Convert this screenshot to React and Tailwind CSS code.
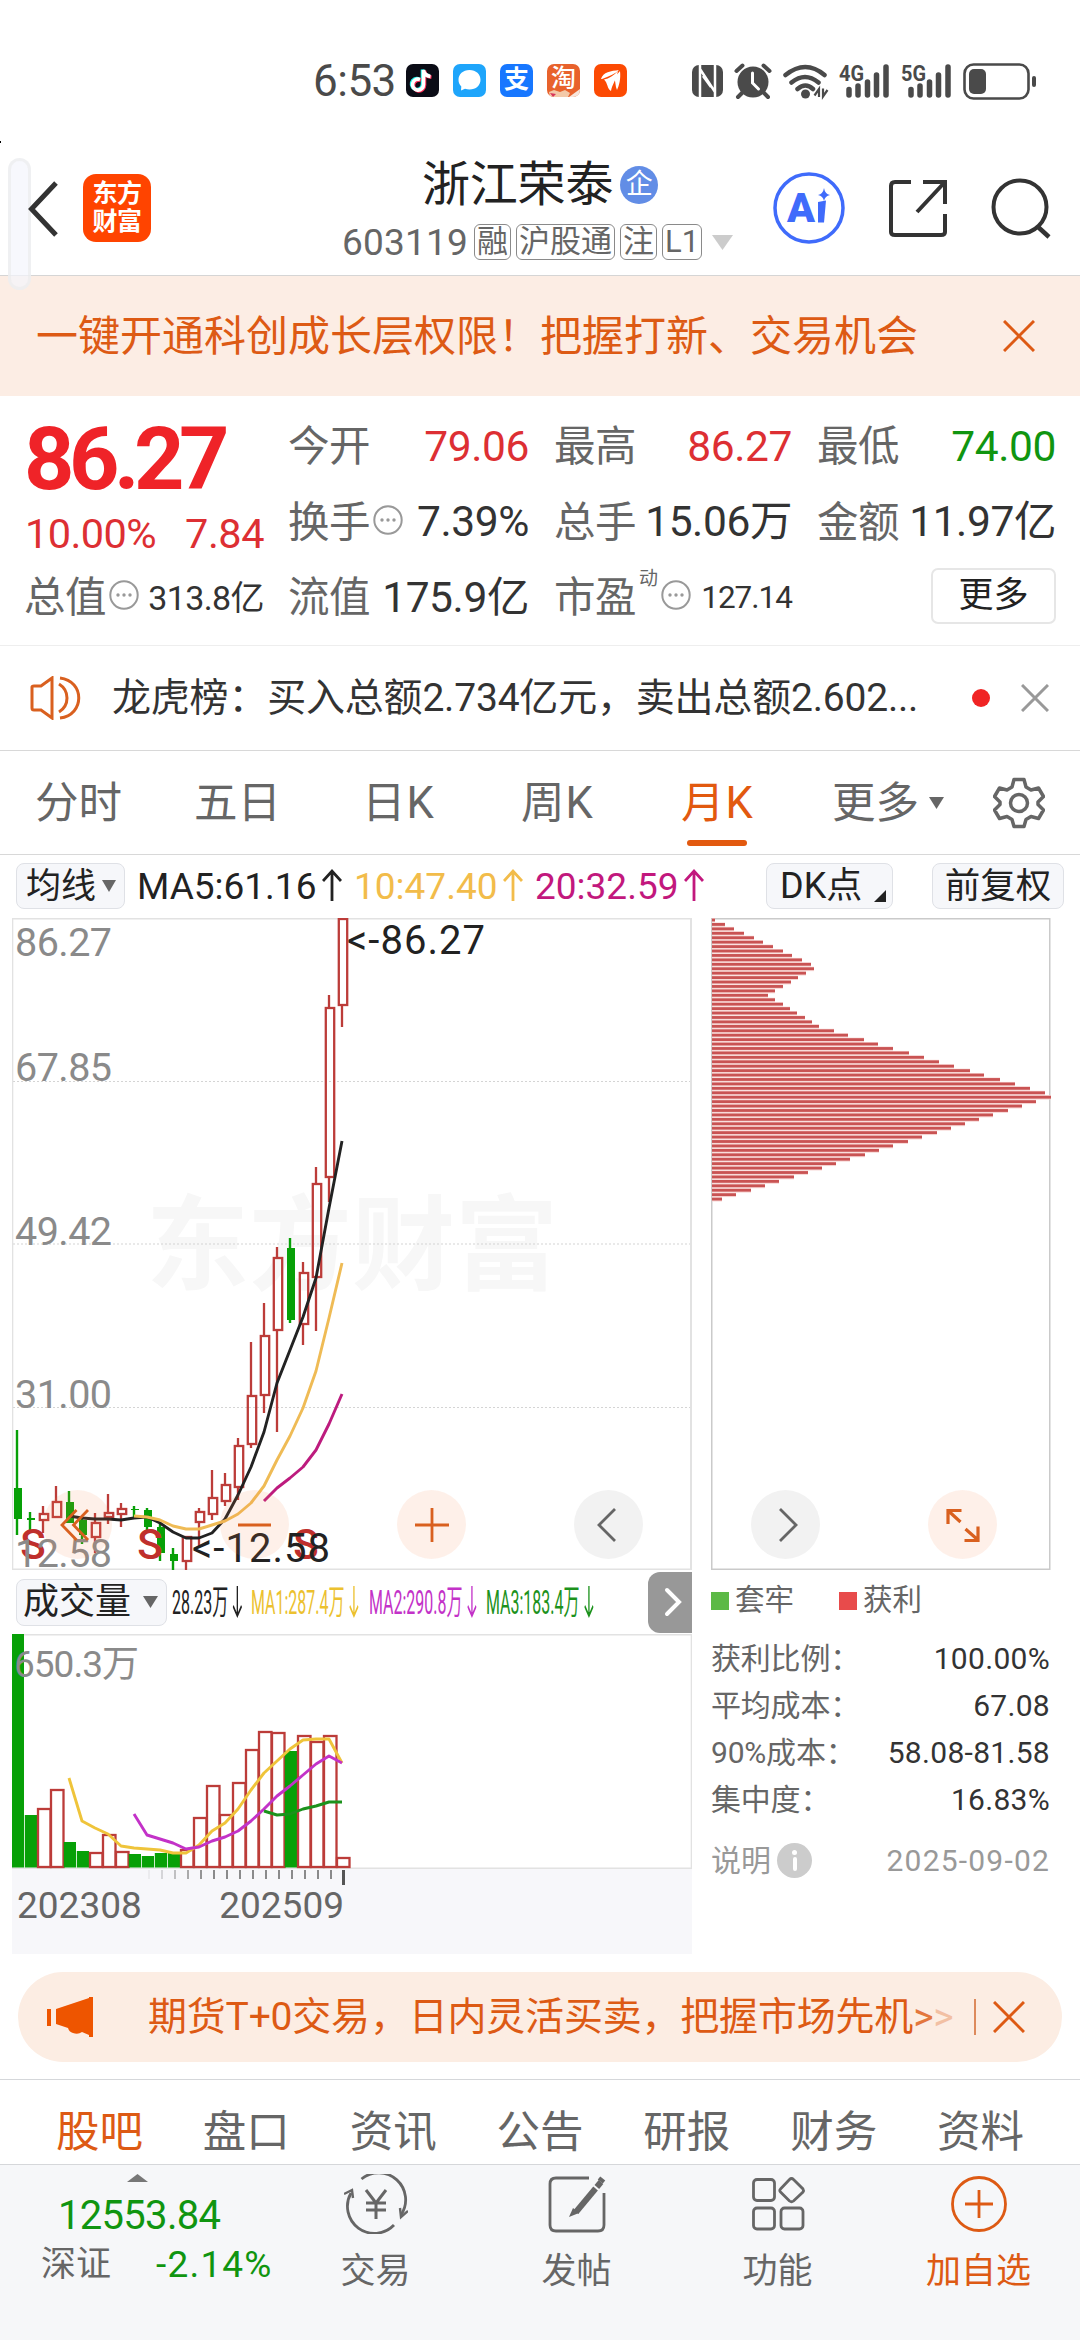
import React from "react";

// monthly candles: [up, high, bodyTop, bodyBottom, low] in chart pixels
const candles = [
  [0, 512, 570, 601, 617],
  [0, 594, 600, 602, 612],
  [1, 588, 596, 602, 615],
  [1, 568, 584, 599, 599],
  [0, 573, 584, 605, 605],
  [0, 600, 602, 617, 626],
  [1, 595, 605, 619, 635],
  [1, 576, 595, 599, 606],
  [1, 585, 591, 596, 609],
  [0, 588, 591, 592, 599],
  [0, 590, 592, 609, 614],
  [0, 605, 609, 635, 643],
  [0, 630, 636, 643, 652],
  [1, 619, 619, 643, 652],
  [1, 590, 594, 604, 629],
  [1, 552, 580, 596, 602],
  [1, 555, 567, 583, 588],
  [1, 520, 528, 569, 582],
  [1, 424, 478, 526, 530],
  [1, 385, 418, 477, 495],
  [1, 329, 340, 412, 514],
  [0, 320, 330, 402, 405],
  [1, 344, 355, 406, 427],
  [1, 249, 266, 359, 413],
  [1, 77, 90, 259, 284],
  [1, 0, 1, 87, 109],
];

const ma5 = [598, 600, 601, 601, 602, 600, 599, 605, 614, 620, 620, 615, 601, 577, 549, 514, 465, 432, 399, 360, 290, 223];
const ma10 = [598, 599, 602, 608, 611, 611, 607, 603, 596, 585, 568, 542, 518, 490, 453, 400, 345];
const ma20 = [583, 570, 560, 549, 532, 506, 476];

// volume bars: [up, top]
const volumes = [
  [0, 0], [0, 181], [1, 174], [1, 155], [0, 208], [0, 217], [1, 218], [1, 200], [1, 217],
  [0, 220], [0, 222], [0, 219], [0, 218], [1, 215], [1, 183], [1, 151], [1, 180], [1, 148],
  [1, 115], [1, 97], [1, 98], [0, 117], [1, 101], [1, 107], [1, 101], [1, 223],
];

const vol5 = [144, 187, 194, 200, 212, 214, 215, 216, 219, 219, 211, 197, 189, 175, 156, 139, 127, 115, 106, 105, 105, 129];
const vol10 = [180, 201, 205, 209, 215, 213, 207, 203, 197, 187, 175, 162, 152, 141, 130, 122, 129];
const vol20 = [177, 181, 180, 175, 172, 168, 168];

const chips = [
  3, 13, 22, 32, 42, 51, 61, 71, 80, 90, 99, 102, 94, 86, 79, 71, 63, 56, 63, 71, 78, 85, 93, 100,
  107, 122, 136, 152, 166, 181, 197, 212, 227, 242, 258, 272, 288, 303, 318, 333, 339, 324, 310,
  296, 281, 267, 253, 239, 225, 210, 196, 181, 167, 153, 138, 124, 110, 96, 82, 67, 53, 39, 24, 10,
];

const STEP = 13;
const cx = (i) => 5 + i * STEP;

// the lines are right aligned, the last point is always candle 25
const linePoints = (values) =>
  values.map((y, i) => `${cx(26 - values.length + i)},${y}`).join(" ");

const StatusBar = () => (
  <div className="h-[130px] flex items-center pt-[31px] pl-[313px] pr-[43px] text-[#4a4a4a]">
    <span className="w-[93px] text-[44px] leading-none tracking-[-0.5px]">6:53</span>
    <div className="flex gap-[14px]">
      <svg className="w-[33px] h-[33px]" viewBox="0 0 33 33">
        <rect width="33" height="33" rx="7" fill="#0b0c16" />
        <g fill="none" strokeWidth="3.600">
          <path d="M14 15.500a5.500 5.500 0 1 0 3.500 5V6c.5 4 3.500 6 7 6.500" stroke="#25f4ee" transform="translate(-1 -.6)" />
          <path d="M14 15.500a5.500 5.500 0 1 0 3.500 5V6c.5 4 3.500 6 7 6.500" stroke="#fe2c55" transform="translate(1 .8)" />
          <path d="M14 15.500a5.500 5.500 0 1 0 3.500 5V6c.5 4 3.500 6 7 6.500" stroke="#fff" />
        </g>
      </svg>
      <svg className="w-[33px] h-[33px]" viewBox="0 0 33 33">
        <rect width="33" height="33" rx="7" fill="#1ea5fb" />
        <path d="M16.500 6c6.600 0 11 4.300 11 9.800s-4.400 9.800-11 9.800c-1.700 0-3.200-.3-4.500-.8L8 26.500l.3-4C6.500 20.800 5.500 18.500 5.500 15.800 5.500 10.300 9.900 6 16.500 6z" fill="#fff" />
      </svg>
      <div className="w-[33px] h-[33px] rounded-[7px] bg-[#1777ff] text-white text-[25px] leading-[32px] text-center font-bold">支</div>
      <div className="relative w-[33px] h-[33px] rounded-[7px] bg-[#e8622c] text-white text-[25px] leading-[29px] text-center font-medium overflow-hidden">
        淘
        <svg className="absolute left-0 bottom-0 w-[33px] h-[8px]" viewBox="0 0 33 8">
          <path d="M2 3l5-2 6 2 5-2 5 3-2 4H3z" fill="#f3c9a8" />
          <path d="M3 4l6 1-3 3z" fill="#d8345a" />
          <path d="M22 8L33 0v8z" fill="#f7e6dc" />
        </svg>
      </div>
      <svg className="w-[33px] h-[33px]" viewBox="0 0 33 33">
        <rect width="33" height="33" rx="7" fill="#fc4a03" />
        <path d="M7 15C9 8 17 7 25 6c-4 4-10 6-17 9zM10 15.500c5-1 10-4 14-8.500-2 9-6 14-7 20-4-2-3-8-7-11.500zM20 14l6-7c1 8-1 15-3 19-2-4-1-8-3-12z" fill="#fff" />
      </svg>
    </div>
    <svg className="ml-auto w-[345px] h-[40px]" viewBox="0 0 345 40" fill="#4a4a4a">
      {/* nfc */}
      <rect x="0" y="4" width="31" height="32" rx="7" />
      <path d="M8 3v33M8 8l15 23M23 3v33M11 15l8 11" stroke="#fff" strokeWidth="2.500" />
      {/* alarm */}
      <circle cx="61" cy="21" r="15.500" />
      <path d="M44.500 10l6-5.500M77.500 10l-6-5.500M51 31l-5 5M71 31l5 5" stroke="#4a4a4a" strokeWidth="4" strokeLinecap="round" />
      <path d="M60.500 12v10l6 6" stroke="#fff" strokeWidth="3" fill="none" strokeLinecap="round" />
      {/* wifi */}
      <g fill="none" stroke="#4a4a4a" strokeWidth="4.500" strokeLinecap="round">
        <path d="M93.500 14q20-16 39 0M99.500 21.500q13.500-11 27 0M105.500 28q8-7 15.500 0" />
      </g>
      <circle cx="113.500" cy="33" r="4.500" />
      <path d="M127 36v-8l-4.500 6.500M131 27.500v8l4.500-6.500" fill="none" stroke="#4a4a4a" strokeWidth="2.200" />
      {/* signals */}
      <text x="147" y="20" fontSize="22" fontWeight="700" textLength="25" lengthAdjust="spacingAndGlyphs">4G</text>
      <text x="209" y="20" fontSize="22" fontWeight="700" textLength="25" lengthAdjust="spacingAndGlyphs">5G</text>
      {[0, 62].map((dx) => (
        <path
          key={dx}
          transform={`translate(${dx} 0)`}
          d="M157 28.500v5.500M166 25v9M175.500 21v13M184.500 14v20M194 6v28"
          stroke="#4a4a4a"
          strokeWidth="5.500"
          strokeLinecap="round"
        />
      ))}
      {/* battery */}
      <rect x="272.500" y="3.500" width="64" height="34" rx="9" fill="none" stroke="#4a4a4a" strokeWidth="2.600" />
      <rect x="277" y="8" width="17" height="25" rx="5" />
      <rect x="340" y="15" width="4" height="11" rx="2" />
    </svg>
  </div>
);

const Tag = ({ children }) => (
  <span className="h-[36px] px-[2px] rounded-[6px] border-[1.500px] border-[#8a8a8a] text-[31px] leading-[33px] text-[#666]">
    {children}
  </span>
);

const Header = () => (
  <div className="relative h-[146px] flex items-start border-b border-[#d5d5d5]">
    <div className="absolute left-0 top-[11px] w-[1px] h-[2px] bg-black" />
    <div className="absolute z-10 left-[8px] top-[28px] w-[23px] h-[132px] rounded-full border-[3px] border-[#ebebeb]/60 bg-[#f3f5fc]/70" />
    <svg className="relative z-20 mt-[50px] ml-[26px] w-[34px] h-[58px]" viewBox="0 0 34 58" fill="none">
      <path d="M30 3L5.500 29 30 55" stroke="#333" strokeWidth="5" />
    </svg>
    <div className="mt-[44px] ml-[23px] w-[68px] h-[68px] rounded-[13px] bg-[#ff4400] text-white text-[25px] leading-[28px] pt-[6px] text-center font-bold tracking-[-0.5px]">
      东方
      <br />
      财富
    </div>
    <div className="ml-[190px] w-[394px] pt-[30px]">
      <div className="flex items-center ml-[81px] h-[50px]">
        <span className="text-[48px] leading-[50px] tracking-[-0.2px] text-[#222]">浙江荣泰</span>
        <span className="ml-[7px] w-[38px] h-[38px] rounded-full bg-[#628de6] text-white text-[27px] leading-[37px] text-center">企</span>
      </div>
      <div className="flex items-center mt-[14px] h-[36px]">
        <span className="ml-px w-[132px] pt-[2px] text-[37px] leading-[36px] tracking-[0.200px] text-[#666]">603119</span>
        <div className="flex gap-[5px]">
          <Tag>融</Tag>
          <Tag>沪股通</Tag>
          <Tag>注</Tag>
          <Tag>L1</Tag>
        </div>
        <svg className="ml-[10px] w-[21px] h-[15px]" viewBox="0 0 21 15">
          <path d="M0 0h21L10.500 15z" fill="#ccc" />
        </svg>
      </div>
    </div>
    <svg className="mt-[42px] ml-[38px] w-[72px] h-[72px]" viewBox="0 0 72 72">
      <circle cx="36" cy="36" r="34" fill="none" stroke="#3f6bfb" strokeWidth="3.500" />
      <text x="14" y="50" fontSize="40" fontWeight="900" fill="#3f6bfb" textLength="28" lengthAdjust="spacingAndGlyphs">A</text>
      <path d="M45 30l8-1.500-2 22h-6z" fill="#3f6bfb" />
      <path d="M51 16q1 6 6 7-5 1-6 6-1-5-6-6 5-1 6-7z" fill="#3f6bfb" />
    </svg>
    <svg className="mt-[48px] ml-[42px] w-[60px] h-[62px]" viewBox="0 0 60 62" fill="none" stroke="#333" strokeWidth="4">
      <path d="M24 4H8q-4 0-4 4v46q0 3 4 3h46q4 0 4-3V36M36 4h22v22M57 5L30 34" />
    </svg>
    <svg className="mt-[46px] ml-[43px] w-[62px] h-[64px]" viewBox="0 0 62 64" fill="none" stroke="#333" strokeWidth="4">
      <circle cx="30" cy="31" r="26.500" />
      <path d="M47 50l12 11" strokeWidth="4.500" />
    </svg>
  </div>
);

const Banner = () => (
  <div className="h-[120px] flex items-center pl-[36px] bg-[#fcede4] text-[#dd5a14]">
    <span className="w-[967px] pt-[2px] text-[42px] leading-none whitespace-nowrap">
      一键开通科创成长层权限！把握打新、交易机会
    </span>
    <svg className="w-[32px] h-[32px]" viewBox="0 0 32 32">
      <path d="M1 1l30 30M31 1L1 31" stroke="#dd5a14" strokeWidth="3" />
    </svg>
  </div>
);

const Dots = () => (
  <svg className="ml-[3px] -mt-[6px] w-[30px] h-[30px] shrink-0" viewBox="0 0 30 30">
    <circle cx="15" cy="15" r="13.700" fill="none" stroke="#999" strokeWidth="2" />
    <g fill="#999">
      <circle cx="9" cy="15" r="1.700" />
      <circle cx="15" cy="15" r="1.700" />
      <circle cx="21" cy="15" r="1.700" />
    </g>
  </svg>
);

const Cell = ({ label, value, dots, className = "text-[#333]" }) => (
  <div className="flex items-center whitespace-nowrap">
    <span className="-ml-px text-[41.500px] text-[#666] tracking-[-0.5px]">{label}</span>
    {dots && <Dots />}
    <span className={"ml-auto text-[42.500px] tracking-[-0.4px] " + className}>{value}</span>
  </div>
);

const Quote = () => (
  <div className="h-[250px] flex border-b border-[#eeeeee] leading-none">
    <div className="w-[289px] pt-[23px] whitespace-nowrap">
      <div className="h-[80px] pl-[24px] flex items-center text-[88px] font-bold tracking-[-5.500px] text-[#ef2328]">86.27</div>
      <div className="h-[70px] pl-[25px] pr-[25px] flex items-center justify-between text-[41.500px] text-[#dd2f33]">
        <span className="tracking-[-0.6px]">10.00%</span>
        <span className="tracking-[-0.5px]">7.84</span>
      </div>
      <div className="h-[58px] pl-[24px] pr-[25px] flex items-center">
        <span className="text-[41.500px] text-[#666] tracking-[-0.5px]">总值</span>
        <Dots />
        <span className="ml-auto text-[34px] text-[#333] tracking-[-0.6px]">313.8亿</span>
      </div>
    </div>
    <div className="pt-[13px] grid grid-cols-[240px_237px_238px] grid-rows-[76px_75px_76px] gap-x-[26px]">
      <Cell label="今开" value="79.06" className="text-[#dd2f33]" />
      <Cell label="最高" value="86.27" className="text-[#dd2f33]" />
      <Cell label="最低" value="74.00" className="text-[#109510]" />
      <Cell label="换手" value="7.39%" dots />
      <Cell label="总手" value="15.06万" />
      <Cell label="金额" value="11.97亿" />
      <Cell label="流值" value="175.9亿" />
      <div className="flex items-center text-[#666]">
        <span className="-ml-px text-[41.500px] tracking-[-0.5px]">市盈</span>
        <span className="text-[19px] -mt-[40px] ml-[3px]">动</span>
        <Dots />
        <span className="ml-auto text-[31.500px] tracking-[-1px] text-[#333]">127.14</span>
      </div>
      <div className="flex items-center justify-end">
        <span className="-mt-[4px] w-[125px] h-[56px] rounded-[7px] border-2 border-[#e6e6e6] text-center text-[35px] leading-[51px] text-[#222]">
          更多
        </span>
      </div>
    </div>
  </div>
);

const News = () => (
  <div className="h-[105px] flex items-center pl-[29px] border-b border-[#d8d8d8]">
    <svg className="w-[52px] h-[44px]" viewBox="0 0 52 44" fill="none" stroke="#d9601f" strokeWidth="3">
      <path d="M3 11q0-1 2-1h7l11-8v40l-11-8H5q-2 0-2-2zM30 8q8 5 8 14t-8 14M31 2c25 3 25 37 0 40" />
    </svg>
    <span className="ml-[31px] w-[860px] text-[39px] leading-none tracking-[-0.200px] whitespace-nowrap text-[#333]">
      龙虎榜：买入总额2.734亿元，卖出总额2.602...
    </span>
    <span className="w-[18px] h-[18px] rounded-full bg-[#f02424]" />
    <svg className="ml-[31px] w-[28px] h-[28px]" viewBox="0 0 28 28">
      <path d="M1 1l26 26M27 1L1 27" stroke="#999" strokeWidth="3" />
    </svg>
  </div>
);

const PeriodTabs = () => (
  <div className="h-[104px] flex items-center pl-[35px] border-b border-[#d8d8d8] text-[43.500px] leading-none text-[#666] whitespace-nowrap">
    <span className="w-[159px] pt-[2px]">分时</span>
    <span className="w-[168px] pt-[2px]">五日</span>
    <span className="w-[159px] pt-[2px] tracking-[1px]">日K</span>
    <span className="w-[160px] pt-[2px] tracking-[1px]">周K</span>
    <span className="relative w-[151px] pt-[2px] tracking-[1px] text-[#e2590f]">
      月K
      <span className="absolute left-[6px] top-[60px] w-[60px] h-[6px] rounded-full bg-[#e2590f]" />
    </span>
    <span className="pt-[2px]">更多</span>
    <svg className="ml-[10px] w-[15px] h-[12px]" viewBox="0 0 15 12">
      <path d="M0 0h15L7.500 12z" fill="#666" />
    </svg>
    <svg className="ml-[49px] w-[52px] h-[52px]" viewBox="0 0 52 52" fill="none" stroke="#666" strokeWidth="3.500" strokeLinejoin="round">
      <path d="M21 2.500h10l2 7.500 5 3 7.500-2 5 8.500-5.500 5.500v2.500l5.500 5.500-5 8.500-7.500-2-5 3-2 7H21l-2-7-5-3-7.500 2-5-8.500L7 27.500V25l-5.500-5.500 5-8.500 7.500 2 5-3z" />
      <circle cx="26" cy="26" r="8.500" />
    </svg>
  </div>
);

const Arrow = ({ up }) => (
  <svg className="ml-[6px] w-[20px] h-[34px] shrink-0" viewBox="0 0 20 34" fill="none" stroke="currentColor" strokeWidth="2.800">
    {up ? <path d="M10 33V3M1 13l9-10 9 10" /> : <path d="M10 1v30M1 21l9 10 9-10" />}
  </svg>
);

const MaBar = () => (
  <div className="h-[63px] flex items-center pl-[16px] pb-[1px] text-[37px] leading-none whitespace-nowrap">
    <span className="w-[109px] h-[46px] flex items-center justify-between pl-[9px] pr-[8px] rounded-[8px] border border-[#dfe1e6] bg-[#f6f7fa] text-[35px] text-[#222]">
      均线
      <svg className="w-[14px] h-[12px]" viewBox="0 0 14 12">
        <path d="M0 0h14L7 12z" fill="#666" />
      </svg>
    </span>
    <span className="ml-[12px] w-[217px] flex text-[#222]">MA5:61.16<Arrow up /></span>
    <span className="w-[181px] flex text-[#f2bc4a]">10:47.40<Arrow up /></span>
    <span className="w-[231px] flex text-[#c2187d]">20:32.59<Arrow up /></span>
    <span className="relative w-[127px] h-[46px] pl-[13px] rounded-[8px] border border-[#dfe1e6] bg-[#f6f7fa] text-[36px] leading-[45px] text-[#222]">
      DK点
      <svg className="absolute right-[6px] bottom-[6px] w-[12px] h-[12px]" viewBox="0 0 12 12">
        <path d="M12 0v12H0z" fill="#222" />
      </svg>
    </span>
    <span className="ml-[39px] w-[132px] h-[46px] rounded-[8px] border border-[#dfe1e6] bg-[#f6f7fa] text-center text-[35.500px] leading-[45px] text-[#222]">
      前复权
    </span>
  </div>
);

const priceLabels = [
  ["86.27", 38],
  ["67.85", 163],
  ["49.42", 327],
  ["31.00", 490],
  ["12.58", 649],
];

const KChart = () => (
  <svg className="block w-[680px] h-[652px]" viewBox="0 0 680 652">
    <text x="134" y="364" fontSize="103" fontWeight="700" fill="#f7f7f7" textLength="412">东方财富</text>
    {[163.5, 326, 489.5].map((y) => (
      <path key={y} d={`M1 ${y}H680`} stroke="#d4d4d4" strokeWidth="1.200" strokeDasharray="2 2" />
    ))}
    <path d="M0 .8H680M0 651.200H680M.5 0V652" stroke="#e2e2e2" strokeWidth="1.600" fill="none" />
    <path d="M679 0V652" stroke="#e2e2e2" strokeWidth="2" />
    {candles.map(([up, high, top, bottom, low], i) =>
      up ? (
        <g key={i} stroke="#bc3c39" strokeWidth="2.300" fill="none">
          <path d={`M${cx(i)} ${high}V${top}M${cx(i)} ${bottom}V${low}`} />
          <rect x={cx(i) - 3.2} y={top} width="8.400" height={bottom - top} />
        </g>
      ) : (
        <g key={i} fill="#07a007">
          <rect x={cx(i) - 1.2} y={high} width="2.400" height={low - high} />
          <rect x={cx(i) - 3} y={top} width="8" height={bottom - top} />
        </g>
      )
    )}
    <g fill="none" strokeWidth="2.900" strokeLinejoin="round">
      <polyline points={linePoints(ma5)} stroke="#222" />
      <polyline points={linePoints(ma10)} stroke="#efbb55" />
      <polyline points={linePoints(ma20)} stroke="#bd1b7e" />
    </g>
    <g fill="#bf2f2c" fontSize="42" fontWeight="500" textAnchor="middle">
      <text x="21" y="641">S</text>
      <text x="138" y="641">S</text>
      <text x="294" y="641">S</text>
    </g>
    <g fill="#8a8a8a" fontSize="39.500">
      {priceLabels.map(([label, y]) => (
        <text key={label} x="3" y={y} textLength="97">{label}</text>
      ))}
    </g>
    <g fill="#222" fontSize="40">
      <text x="335" y="36" textLength="138">&lt;-86.27</text>
      <text x="180" y="644" textLength="138">&lt;-12.58</text>
    </g>
  </svg>
);

const ChipChart = () => (
  <svg className="block w-[340px] h-[652px]" viewBox="0 0 340 652">
    <rect x=".75" y=".75" width="338" height="650.500" fill="none" stroke="#cacaca" strokeWidth="1.500" />
    {chips.map((w, i) => (
      <g key={i}>
        <rect x="1" y={i * 4.43} width={w} height="4.430" fill="#f8d8d6" />
        <rect x="1" y={0.6 + i * 4.43} width={w} height="2.800" fill="#c95353" />
      </g>
    ))}
  </svg>
);

const RoundButton = ({ gray, children }) => (
  <span
    className={
      "w-[69px] h-[69px] rounded-full flex items-center justify-center " +
      (gray ? "bg-[#f2f2f2]" : "bg-[#f5854a]/12")
    }
  >
    <svg className="w-[40px] h-[40px]" viewBox="0 0 40 40" fill="none" stroke={gray ? "#666" : "#d9601f"} strokeWidth="2.800">
      {children}
    </svg>
  </span>
);

const ChartButtons = () => (
  <div className="absolute left-[43px] top-[572px] flex gap-[108px]">
    <RoundButton><path d="M18.500 5L4 20l14.500 15M30 5L15.500 20 30 35" /></RoundButton>
    <RoundButton><path d="M3 20h33" /></RoundButton>
    <RoundButton><path d="M3 20h34M20 3v34" /></RoundButton>
    <RoundButton gray><path d="M26 4L10 20l16 16" /></RoundButton>
    <RoundButton gray><path d="M14 4l16 16-16 16" /></RoundButton>
    <RoundButton><path d="M18.500 5.500H5v13.500M5 5.500L17.500 17M22.500 24L35 35M35 21.500v14H21.500" strokeWidth="3.200" /></RoundButton>
  </div>
);

const VolumeHeader = () => (
  <div className="h-[64px] flex items-center pl-[4px] leading-none whitespace-nowrap">
    <span className="w-[151px] h-[47px] flex items-center justify-between pl-[6px] pr-[8px] rounded-[8px] border border-[#dfe1e6] bg-[#f6f7fa] text-[36px] text-[#222]">
      成交量
      <svg className="w-[15px] h-[12px]" viewBox="0 0 15 12">
        <path d="M0 0h15L7.500 12z" fill="#666" />
      </svg>
    </span>
    <div className="ml-[5px] w-[476px] flex text-[34px]">
      <span className="w-[79px]"><span className="inline-flex gap-[4px] origin-left scale-x-[0.47] text-[#222]">28.23万<Arrow /></span></span>
      <span className="w-[118px]"><span className="inline-flex gap-[4px] origin-left scale-x-[0.47] text-[#ecc12f]">MA1:287.4万<Arrow /></span></span>
      <span className="w-[117px]"><span className="inline-flex gap-[4px] origin-left scale-x-[0.47] text-[#c332c8]">MA2:290.8万<Arrow /></span></span>
      <span className="w-[117px]"><span className="inline-flex gap-[4px] origin-left scale-x-[0.47] text-[#1c921c]">MA3:183.4万<Arrow /></span></span>
    </div>
    <span className="w-[44px] h-[61px] rounded-l-[12px] bg-[#989898] flex items-center justify-center">
      <svg className="ml-[6px] w-[18px] h-[30px]" viewBox="0 0 18 30" fill="none">
        <path d="M3 3l12 12L3 27" stroke="#fff" strokeWidth="4" strokeLinecap="round" />
      </svg>
    </span>
  </div>
);

const VolumeChart = () => (
  <svg className="block w-[680px] h-[235px]" viewBox="0 0 680 235">
    <path d="M0 .8H680M0 234.200H680M.5 0V235M679.500 0V235" stroke="#e2e2e2" strokeWidth="1.600" fill="none" />
    {volumes.map(([up, top], i) =>
      up ? (
        <rect key={i} x={i * STEP} y={top + 1} width="12.500" height={232 - top} fill="#fff" stroke="#bc3c39" strokeWidth="2.300" />
      ) : (
        <rect key={i} x={i * STEP - 0.2} y={top} width="12.200" height={233.5 - top} fill="#07a007" />
      )
    )}
    <g fill="none" strokeWidth="2.900" strokeLinejoin="round">
      <polyline points={linePoints(vol5)} stroke="#efc43a" />
      <polyline points={linePoints(vol10)} stroke="#c332c8" />
      <polyline points={linePoints(vol20)} stroke="#1c921c" />
    </g>
    <text x="2" y="43" fontSize="37" fill="#8a8a8a" textLength="125">650.3万</text>
  </svg>
);

const DateAxis = () => (
  <div className="h-[85px] w-[680px] bg-[#f7f7fa] text-[#666] text-[37px] leading-none">
    <svg className="block w-[340px] h-[18px]" viewBox="0 0 340 18">
      {Array.from({ length: 15 }, (_, i) => (
        <path key={i} d={`M${137 + i * STEP} 1v9`} stroke="#666" strokeWidth="1.500" opacity={Math.min(1, (i + 0.5) / 5)} />
      ))}
      <path d="M331.500 1v15" stroke="#555" strokeWidth="3" />
    </svg>
    <div className="flex w-[332px] justify-between pl-[5px]">
      <span>202308</span>
      <span>202509</span>
    </div>
  </div>
);

const costRows = [
  ["获利比例：", "100.00%"],
  ["平均成本：", "67.08"],
  ["90%成本：", "58.08-81.58"],
  ["集中度：", "16.83%"],
];

const ChipInfo = () => (
  <div className="w-[339px] pt-[7px] text-[30px] leading-none text-[#666] whitespace-nowrap">
    <div className="flex items-center h-[48px]">
      <span className="w-[18px] h-[18px] bg-[#5cb946]" />
      <span className="ml-[6px] w-[104px] text-[29.500px]">套牢</span>
      <span className="w-[18px] h-[18px] bg-[#e84b4b]" />
      <span className="ml-[6px] text-[29.500px]">获利</span>
    </div>
    <div className="mt-[10px]">
      {costRows.map(([label, value]) => (
        <div key={label} className="h-[47px] flex items-center justify-between">
          <span className="tracking-[-0.200px]">{label}</span>
          <span className="text-[#333] tracking-[0.300px]">{value}</span>
        </div>
      ))}
    </div>
    <div className="mt-[14px] h-[47px] flex items-center text-[#999]">
      <span>说明</span>
      <span className="ml-[6px] w-[35px] h-[35px] rounded-full bg-[#ccc] flex flex-col items-center pt-[7px] gap-[2px]">
        <span className="w-[5px] h-[5px] rounded-full bg-white" />
        <span className="w-[4px] h-[14px] rounded-full bg-white" />
      </span>
      <span className="ml-auto tracking-[1.200px]">2025-09-02</span>
    </div>
  </div>
);

const Ad = () => (
  <div className="mx-[18px] mt-[18px] h-[90px] rounded-full bg-[#fcede3] flex items-center pl-[29px] text-[#dd5a14]">
    <svg className="w-[47px] h-[40px]" viewBox="0 0 47 40" fill="#ee5500">
      <path d="M0 12h4v17H0zM9 12L42 1V0h4v40h-4v-2l-7-3q-4 3-9 1-4-1-5-5L9 27z" />
    </svg>
    <span className="ml-[54px] w-[826px] text-[39px] leading-none tracking-[-0.200px] whitespace-nowrap">
      期货T+0交易，日内灵活买卖，把握市场先机<span className="opacity-80">&gt;</span><span className="opacity-30">&gt;</span>
    </span>
    <span className="w-[2px] h-[36px] bg-[#dd8a5c]" />
    <svg className="ml-[17px] w-[32px] h-[32px]" viewBox="0 0 32 32">
      <path d="M1 1l30 30M31 1L1 31" stroke="#dd5a14" strokeWidth="3" />
    </svg>
  </div>
);

const sections = ["盘口", "资讯", "公告", "研报", "财务", "资料"];

const SectionTabs = () => (
  <div className="mt-[17px] h-[86px] flex items-center justify-between px-[56px] pt-[22px] border-y border-[#d5d7da] text-[43.500px] leading-none text-[#666]">
    <span className="text-[#dd5a14]">股吧</span>
    {sections.map((name) => (
      <span key={name}>{name}</span>
    ))}
  </div>
);

const NavItem = ({ label, className = "", children }) => (
  <div className={"w-[201px] flex flex-col items-center pt-[9px] " + className}>
    <svg className="w-[64px] h-[60px]" viewBox="0 0 64 60" fill="none" stroke="currentColor" strokeWidth="2.800">
      {children}
    </svg>
    <span className="mt-[20px] text-[35px] leading-[35px]">{label}</span>
  </div>
);

const BottomBar = () => (
  <div className="h-[175px] flex bg-[#f6f7f9] text-[#666] leading-none whitespace-nowrap">
    <div className="w-[275px]">
      <svg className="block mt-[9px] ml-[127px] w-[21px] h-[8px]" viewBox="0 0 21 8">
        <path d="M0 8h21L10.500 0z" fill="#777" />
      </svg>
      <div className="mt-[14px] pl-[58px] text-[40px] tracking-[-0.7px] text-[#109510]">12553.84</div>
      <div className="mt-[10px] pl-[41px] flex items-center">
        <span className="w-[115px] text-[35px]">深证</span>
        <span className="text-[37px] tracking-[1.200px] text-[#109510]">-2.14%</span>
      </div>
    </div>
    <NavItem label="交易">
      <path d="M17.500 5A27 27 0 0 1 57 41M50 51A27 27 0 0 1 7 19" />
      <path d="M64 37l-7 6-1-9M0 20l8-4 1 8" strokeWidth="2.400" />
      <path d="M22 16l10 13 10-13M32 28v17M22 29h20M22 36h20" strokeWidth="3" />
    </NavItem>
    <NavItem label="发帖">
      <path d="M44 4H11q-6 0-6 6v41q0 6 6 6h42q6 0 6-6V19" />
      <path d="M56 8L31 38" strokeWidth="6" />
      <path d="M48 11l7 6" stroke="#f6f7f9" strokeWidth="2" />
      <path d="M28 34l6 5-10 4z" fill="currentColor" stroke="none" />
      <path d="M54 4l5 4" strokeWidth="4" />
    </NavItem>
    <NavItem label="功能">
      <rect x="7.500" y="5.500" width="21" height="21" rx="3.500" />
      <rect x="7.500" y="34" width="21" height="21" rx="3.500" />
      <rect x="35" y="34" width="22" height="21" rx="3.500" />
      <path d="M45.500 4.500q1 0 2 1l9.500 9.500q1 1.500 0 3l-9.500 9q-2 1.500-4 0l-9-9q-1.500-1.500 0-3l9-9.500q1-1 2-1z" />
    </NavItem>
    <NavItem label="加自选" className="text-[#dd5a14]">
      <circle cx="32" cy="30" r="26.500" />
      <path d="M18 30h28M32 16v28" />
    </NavItem>
  </div>
);

const App = () => {
  return (
    <div
      lang="zh-CN"
      className="w-[1080px] h-[2340px] overflow-hidden bg-white font-['Roboto','Noto_Sans_CJK_SC',sans-serif]"
    >
      <StatusBar />
      <Header />
      <Banner />
      <Quote />
      <News />
      <PeriodTabs />
      <MaBar />
      <div className="relative flex">
        <div className="w-[699px] mr-[12px] pl-[12px]">
          <KChart />
          <VolumeHeader />
          <VolumeChart />
          <DateAxis />
        </div>
        <div>
          <ChipChart />
          <ChipInfo />
        </div>
        <ChartButtons />
      </div>
      <Ad />
      <SectionTabs />
      <BottomBar />
    </div>
  );
};

export default App;
